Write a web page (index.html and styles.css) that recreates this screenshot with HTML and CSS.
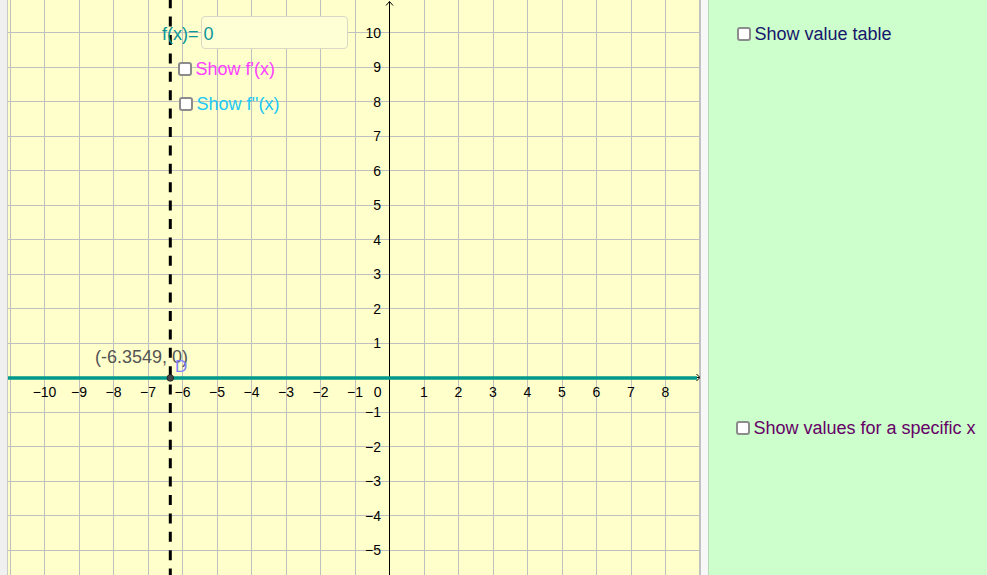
FILE: index.html
```html
<!DOCTYPE html>
<html lang="en">
<head>
<meta charset="utf-8">
<title>Function explorer</title>
<link rel="stylesheet" href="styles.css">
</head>
<body>
<div class="app">
  <div class="edge"></div>
  <div class="graphics">
    <svg class="plot" width="692" height="575" viewBox="0 0 692 575">
      <path class="grid" d="M2 0V575M36.5 0V575M71 0V575M105.5 0V575M140 0V575M174.5 0V575M209 0V575M243.5 0V575M278 0V575M312.5 0V575M347 0V575M416 0V575M450.5 0V575M485 0V575M519.5 0V575M554 0V575M588.5 0V575M623 0V575M657.5 0V575M691.5 0V575M0 32.5H692M0 67H692M0 101.5H692M0 136H692M0 170.5H692M0 205H692M0 239.5H692M0 274H692M0 308.5H692M0 343H692M0 412H692M0 446.5H692M0 481H692M0 515.5H692M0 550H692"/>
      <path class="axis" d="M381.5 1.5V575M0 377.5H691.5"/>
      <path class="axis" d="M378 5.5L381.5 1.5L385 5.5M688.5 374L692 377.5L688.5 381"/>
      <path class="fn" d="M0 378H689"/>
      <g class="tick tick-x">
        <text x="36.5" y="396.7">−10</text>
        <text x="71" y="396.7">−9</text>
        <text x="105.5" y="396.7">−8</text>
        <text x="140" y="396.7">−7</text>
        <text x="174.5" y="396.7">−6</text>
        <text x="209" y="396.7">−5</text>
        <text x="243.5" y="396.7">−4</text>
        <text x="278" y="396.7">−3</text>
        <text x="312.5" y="396.7">−2</text>
        <text x="347" y="396.7">−1</text>
        <text x="416" y="396.7">1</text>
        <text x="450.5" y="396.7">2</text>
        <text x="485" y="396.7">3</text>
        <text x="519.5" y="396.7">4</text>
        <text x="554" y="396.7">5</text>
        <text x="588.5" y="396.7">6</text>
        <text x="623" y="396.7">7</text>
        <text x="657.5" y="396.7">8</text>
      </g>
      <g class="tick tick-y">
        <text x="373.5" y="396.7">0</text>
        <text x="373" y="37.5">10</text>
        <text x="373" y="72">9</text>
        <text x="373" y="106.5">8</text>
        <text x="373" y="141">7</text>
        <text x="373" y="175.5">6</text>
        <text x="373" y="210">5</text>
        <text x="373" y="244.5">4</text>
        <text x="373" y="279">3</text>
        <text x="373" y="313.5">2</text>
        <text x="373" y="348">1</text>
        <text x="373" y="417">−1</text>
        <text x="373" y="451.5">−2</text>
        <text x="373" y="486">−3</text>
        <text x="373" y="520.5">−4</text>
        <text x="373" y="555">−5</text>
      </g>
      <text class="pt-label" x="87" y="363.3">(-6.3549, 0)</text>
      <text class="pt-name" x="167" y="371.5">D</text>
      <path class="dash" d="M162.3 -1.8V580"/>
      <circle class="pt" cx="162.3" cy="378" r="3.3"/>
    </svg>
    <div class="widget fx-widget">
      <span class="fx-label">f(x)=</span>
      <div class="fx-input">0</div>
    </div>
    <label class="widget check check-d1"><input type="checkbox" class="box"><span>Show f'(x)</span></label>
    <label class="widget check check-d2"><input type="checkbox" class="box"><span>Show f''(x)</span></label>
  </div>
  <div class="divider"></div>
  <div class="panel">
    <label class="check check-table"><input type="checkbox" class="box"><span>Show value table</span></label>
    <label class="check check-specific"><input type="checkbox" class="box"><span>Show values for a specific x</span></label>
  </div>
</div>
</body>
</html>
```
FILE: styles.css
```css
* { box-sizing: border-box; }

body {
  margin: 0;
  overflow: hidden;
  font-family: "Liberation Sans", Arial, sans-serif;
}

.app {
  display: flex;
  width: 987px;
  height: 575px;
}

.edge {
  flex: 0 0 8px;
  background: #f0f0f0;
  border-right: 1px solid #c8c8c8;
}

.graphics {
  flex: 0 0 692px;
  position: relative;
  background: #ffffcc;
  overflow: hidden;
}

.plot { display: block; }

.grid {
  fill: none;
  stroke: #c0c0c0;
  stroke-width: 1;
  shape-rendering: crispEdges;
}

.axis {
  fill: none;
  stroke: #000;
  stroke-width: 1;
}

.fn {
  stroke: #00998a;
  stroke-width: 3.5;
}

.dash {
  stroke: #000;
  stroke-width: 3;
  stroke-dasharray: 10 8.4;
}

.pt {
  fill: #444;
  stroke: #222;
  stroke-width: 0.8;
}

.tick {
  font-family: "Liberation Sans", Arial, sans-serif;
  font-size: 14px;
  fill: #000;
}

.tick-x { text-anchor: middle; }
.tick-y { text-anchor: end; }

.pt-label {
  font-family: "Liberation Sans", Arial, sans-serif;
  font-size: 18px;
  fill: #555555;
}

.pt-name {
  font-family: "Liberation Sans", Arial, sans-serif;
  font-size: 17px;
  fill: #7f7fff;
}

.widget { position: absolute; }

.fx-widget {
  left: 154px;
  top: 16px;
  display: flex;
  align-items: flex-start;
  font-size: 18px;
  line-height: 20px;
  color: #0a9696;
}

.fx-label { padding-top: 8px; }

.fx-input {
  margin-left: 2px;
  width: 147px;
  height: 33px;
  border: 1px solid #d8d8c4;
  border-radius: 4px;
  background: #ffffd6;
  padding: 7px 0 0 2px;
}

.check {
  display: flex;
  align-items: center;
  height: 20px;
  font-size: 18px;
  line-height: 20px;
  white-space: nowrap;
}

.box {
  appearance: none;
  -webkit-appearance: none;
  display: block;
  margin: 0 3.5px 0 0;
  width: 14px;
  height: 14px;
  min-width: 14px;
  border: 2px solid #8c8c8c;
  border-radius: 3px;
  background: #fff;
  flex: 0 0 14px;
}

.check-d1 { left: 170px; top: 59px; color: #ff40ff; }
.check-d2 { left: 171px; top: 94px; color: #20c8f4; }

.divider {
  flex: 0 0 9px;
  background: #f7f7f7;
  border-left: 1px solid #c4c4c4;
  border-right: 1px solid #b9d6b9;
}

.panel {
  flex: 1;
  background: #ccffcc;
  display: flex;
  flex-direction: column;
  align-items: flex-start;
  padding: 24px 0 0 28px;
}

.check-table { color: #16166a; }

.check-specific {
  margin-top: 374px;
  margin-left: -1px;
  color: #660066;
}
```
